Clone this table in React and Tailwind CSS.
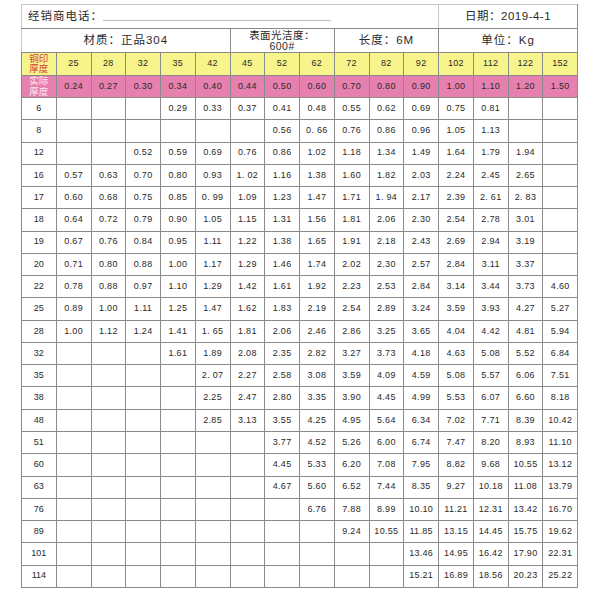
import React from "react";

const sizes = ["25", "28", "32", "35", "42", "45", "52", "62", "72", "82", "92", "102", "112", "122", "152"];
const actual = ["0.24", "0.27", "0.30", "0.34", "0.40", "0.44", "0.50", "0.60", "0.70", "0.80", "0.90", "1.00", "1.10", "1.20", "1.50"];

const _ = "";
const rows = [
  ["6", [_, _, _, "0.29", "0.33", "0.37", "0.41", "0.48", "0.55", "0.62", "0.69", "0.75", "0.81", _, _]],
  ["8", [_, _, _, _, _, _, "0.56", "0. 66", "0.76", "0.86", "0.96", "1.05", "1.13", _, _]],
  ["12", [_, _, "0.52", "0.59", "0.69", "0.76", "0.86", "1.02", "1.18", "1.34", "1.49", "1.64", "1.79", "1.94", _]],
  ["16", ["0.57", "0.63", "0.70", "0.80", "0.93", "1. 02", "1.16", "1.38", "1.60", "1.82", "2.03", "2.24", "2.45", "2.65", _]],
  ["17", ["0.60", "0.68", "0.75", "0.85", "0. 99", "1.09", "1.23", "1.47", "1.71", "1. 94", "2.17", "2.39", "2. 61", "2. 83", _]],
  ["18", ["0.64", "0.72", "0.79", "0.90", "1.05", "1.15", "1.31", "1.56", "1.81", "2.06", "2.30", "2.54", "2.78", "3.01", _]],
  ["19", ["0.67", "0.76", "0.84", "0.95", "1.11", "1.22", "1.38", "1.65", "1.91", "2.18", "2.43", "2.69", "2.94", "3.19", _]],
  ["20", ["0.71", "0.80", "0.88", "1.00", "1.17", "1.29", "1.46", "1.74", "2.02", "2.30", "2.57", "2.84", "3.11", "3.37", _]],
  ["22", ["0.78", "0.88", "0.97", "1.10", "1.29", "1.42", "1.61", "1.92", "2.23", "2.53", "2.84", "3.14", "3.44", "3.73", "4.60"]],
  ["25", ["0.89", "1.00", "1.11", "1.25", "1.47", "1.62", "1.83", "2.19", "2.54", "2.89", "3.24", "3.59", "3.93", "4.27", "5.27"]],
  ["28", ["1.00", "1.12", "1.24", "1.41", "1. 65", "1.81", "2.06", "2.46", "2.86", "3.25", "3.65", "4.04", "4.42", "4.81", "5.94"]],
  ["32", [_, _, _, "1.61", "1.89", "2.08", "2.35", "2.82", "3.27", "3.73", "4.18", "4.63", "5.08", "5.52", "6.84"]],
  ["35", [_, _, _, _, "2. 07", "2.27", "2.58", "3.08", "3.59", "4.09", "4.59", "5.08", "5.57", "6.06", "7.51"]],
  ["38", [_, _, _, _, "2.25", "2.47", "2.80", "3.35", "3.90", "4.45", "4.99", "5.53", "6.07", "6.60", "8.18"]],
  ["48", [_, _, _, _, "2.85", "3.13", "3.55", "4.25", "4.95", "5.64", "6.34", "7.02", "7.71", "8.39", "10.42"]],
  ["51", [_, _, _, _, _, _, "3.77", "4.52", "5.26", "6.00", "6.74", "7.47", "8.20", "8.93", "11.10"]],
  ["60", [_, _, _, _, _, _, "4.45", "5.33", "6.20", "7.08", "7.95", "8.82", "9.68", "10.55", "13.12"]],
  ["63", [_, _, _, _, _, _, "4.67", "5.60", "6.52", "7.44", "8.35", "9.27", "10.18", "11.08", "13.79"]],
  ["76", [_, _, _, _, _, _, _, "6.76", "7.88", "8.99", "10.10", "11.21", "12.31", "13.42", "16.70"]],
  ["89", [_, _, _, _, _, _, _, _, "9.24", "10.55", "11.85", "13.15", "14.45", "15.75", "19.62"]],
  ["101", [_, _, _, _, _, _, _, _, _, _, "13.46", "14.95", "16.42", "17.90", "22.31"]],
  ["114", [_, _, _, _, _, _, _, _, _, _, "15.21", "16.89", "18.56", "20.23", "25.22"]],
];

const cell = "border border-[#8a8a8a] text-center align-middle p-0";

export default function App() {
  return (
    <div className="min-h-[592px] w-[599px] bg-white pt-[4px] pl-[21px] text-[#2a2a2a] [font-family:'Liberation_Sans','Noto_Sans_CJK_SC',sans-serif]">
      <table className="w-[556px] table-fixed border-collapse">
        <colgroup>
          {Array.from({ length: 16 }).map((_, i) => (
            <col key={i} className="w-[34.75px]" />
          ))}
        </colgroup>
        <tbody>
          {/* 第一行 */}
          <tr className="h-[24px]">
            <td colSpan={12} className="border border-[#c8c8c8] border-b-[#8a8a8a] p-0 text-left align-middle">
              <div className="flex items-center pl-[6px] text-[11.5px] tracking-[1px]">
                <span>经销商电话：</span>
                <span className="mt-[8px] h-px w-[228px] bg-[#bdbdbd]" />
              </div>
            </td>
            <td colSpan={4} className="border border-[#c8c8c8] border-b-[#8a8a8a] border-r-[#8a8a8a] p-0 text-center text-[11.5px] tracking-[0.5px]">
              日期：2019-4-1
            </td>
          </tr>
          {/* 第二行 */}
          <tr className="h-[24px]">
            <td colSpan={6} className={`${cell} border-l-[#c8c8c8] text-[11.5px] tracking-[1px]`}>材质：正品304</td>
            <td colSpan={3} className={`${cell} text-[10.5px] tracking-[0.5px]`}>
              <div className="flex flex-col items-center leading-[11px]">
                <span>表面光洁度：</span>
                <span>600#</span>
              </div>
            </td>
            <td colSpan={3} className={`${cell} text-[11.5px] tracking-[1px]`}>长度：6M</td>
            <td colSpan={4} className={`${cell} text-[11.5px] tracking-[1px]`}>单位：Kg</td>
          </tr>
          {/* 铜印厚度 */}
          <tr className="h-[23px] bg-[#f8f48c]">
            <td className={`${cell} text-[9.5px] text-[#d2413a]`}>
              <div className="flex flex-col items-center leading-[10.5px]">
                <span>铜印</span>
                <span>厚度</span>
              </div>
            </td>
            {sizes.map((s) => (
              <td key={s} className={`${cell} text-[9px] tracking-[0.3px]`}>{s}</td>
            ))}
          </tr>
          {/* 实际厚度 */}
          <tr className="h-[22px] bg-[#e680ae]">
            <td className={`${cell} text-[9.5px] text-[#fbe8f2]`}>
              <div className="flex flex-col items-center leading-[10.5px]">
                <span>实际</span>
                <span>厚度</span>
              </div>
            </td>
            {actual.map((s) => (
              <td key={s} className={`${cell} text-[9px] tracking-[0.3px]`}>{s}</td>
            ))}
          </tr>
          {rows.map(([label, vals]) => (
            <tr key={label} className="h-[22.27px]">
              <td className={`${cell} text-[9px]`}>{label}</td>
              {vals.map((v, i) => (
                <td key={i} className={`${cell} text-[9px] tracking-[0.3px]`}>{v}</td>
              ))}
            </tr>
          ))}
        </tbody>
      </table>
    </div>
  );
}
